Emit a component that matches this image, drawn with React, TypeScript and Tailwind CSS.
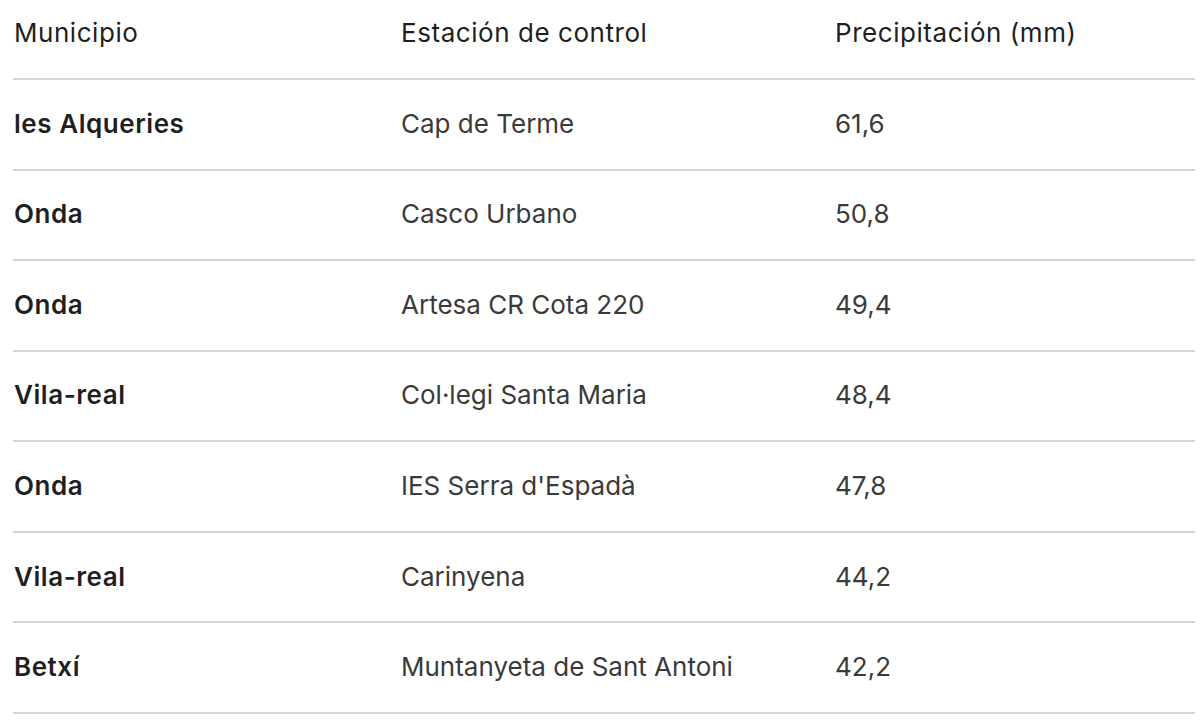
const ROWS = [
	{ municipio: "les Alqueries", estacion: "Cap de Terme", mm: "61,6" },
	{ municipio: "Onda", estacion: "Casco Urbano", mm: "50,8" },
	{ municipio: "Onda", estacion: "Artesa CR Cota 220", mm: "49,4" },
	{ municipio: "Vila-real", estacion: "Col·legi Santa Maria", mm: "48,4" },
	{ municipio: "Onda", estacion: "IES Serra d'Espadà", mm: "47,8" },
	{ municipio: "Vila-real", estacion: "Carinyena", mm: "44,2" },
	{ municipio: "Betxí", estacion: "Muntanyeta de Sant Antoni", mm: "42,2" }
]

export default function App() {
	return (
		<div
			className="min-h-screen bg-white pl-[13px] pr-[5px] text-[26px] text-[#3a3a3a]"
			style={{ fontFamily: "Inter, 'Noto Sans', sans-serif" }}
		>
			<div className="grid h-[80px] grid-cols-[388px_434px_1fr] items-center border-b-2 border-[#d4d4d4] pb-[14px] tracking-[0.55px] text-[#1f1f1f]">
				<div className="pl-px">Municipio</div>
				<div>Estación de control</div>
				<div>Precipitación (mm)</div>
			</div>
			{ROWS.map((row, i) => (
				<div
					key={i}
					className="grid h-[90.57px] grid-cols-[388px_434px_1fr] items-center border-b-2 border-[#d4d4d4] pb-[2px]"
				>
					<div className="pl-px font-semibold tracking-[0.55px] text-[#1f1f1f]">{row.municipio}</div>
					<div>{row.estacion}</div>
					<div>{row.mm}</div>
				</div>
			))}
		</div>
	)
}
